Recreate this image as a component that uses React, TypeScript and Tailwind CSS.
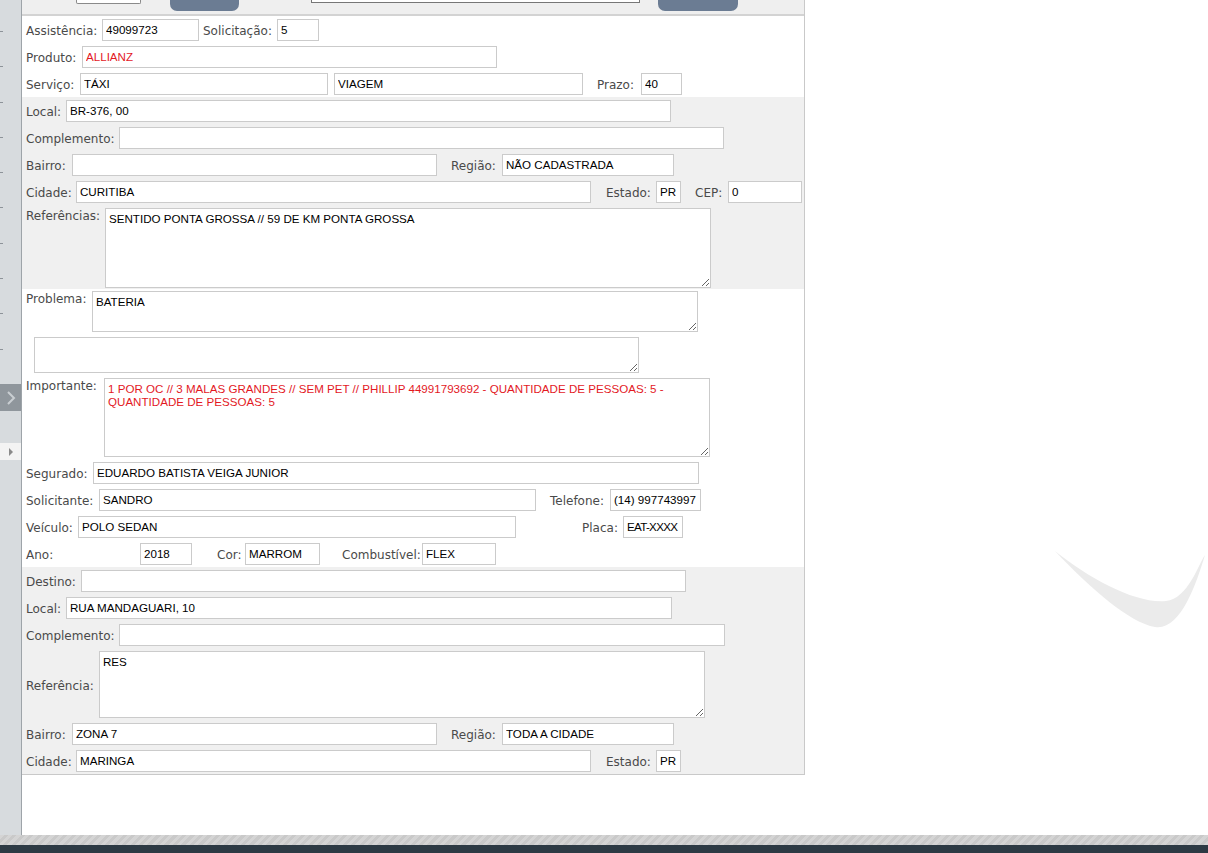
import React from "react";

// rótulo com largura fixa (do início do texto até o campo)
function L({ t, c = "", top = false }: { t: string; c?: string; top?: boolean }) {
  return (
    <span
      className={`shrink-0 whitespace-nowrap text-[12px] leading-[15px] text-[#4a4a4a] ${
        top ? "pt-[1px]" : "pt-[4px]"
      } ${c}`}
    >
      {t}
    </span>
  );
}

function I({ v = "", c = "", red = false }: { v?: string; c?: string; red?: boolean }) {
  return (
    <input
      readOnly
      value={v}
      className={`h-[22px] shrink-0 border border-[#cbcbcb] bg-white px-[3px] font-['Liberation_Sans',Arial,sans-serif] text-[11.6px] outline-none ${
        red ? "text-[#e3191f]" : "text-black"
      } ${c}`}
    />
  );
}

function T({ v = "", c = "", red = false }: { v?: string; c?: string; red?: boolean }) {
  return (
    <textarea
      readOnly
      value={v}
      className={`shrink-0 border border-[#cbcbcb] bg-white px-[3px] py-[3px] font-['Liberation_Sans',Arial,sans-serif] text-[11.6px] leading-[13px] outline-none ${
        red ? "text-[#e3191f]" : "text-black"
      } ${c}`}
    />
  );
}

const row = "flex h-[27px] items-center pl-[4px]";

function Sidebar() {
  const ticks = [0, 1, 2, 3, 4, 5, 6, 7, 8, 9];
  return (
    <div className="flex w-[22px] shrink-0 flex-col border-r border-[#9ea4a9] bg-[#d7dbde]">
      <div className="flex h-[384px] flex-col pt-[31px]">
        {ticks.map((i) => (
          <div key={i} className="mb-[35px] h-[1px] w-[3px] bg-[#8d9399]" />
        ))}
      </div>
      <div className="flex h-[27px] w-[21px] items-center justify-center bg-[#8f969c]">
        <svg width="12" height="16" viewBox="0 0 12 16">
          <path d="M3 2 L9 8 L3 14" fill="none" stroke="#c9ced2" strokeWidth="2" />
        </svg>
      </div>
      <div className="mt-[32px] flex h-[17px] w-[21px] items-center justify-center bg-[#f3f3f3]">
        <svg width="6" height="8" viewBox="0 0 6 8">
          <path d="M1 0 L5 4 L1 8 Z" fill="#8a8a8a" />
        </svg>
      </div>
    </div>
  );
}

export default function App() {
  return (
    <div className="relative flex h-[853px] w-[1208px] flex-col overflow-hidden bg-white font-['DejaVu_Sans',Verdana,sans-serif]">
      <div className="flex h-[835px]">
        <Sidebar />
        <div className="relative flex-1 bg-white">
          <div className="w-[783px] border-r border-b border-[#c9c9c9]">
            {/* topo cortado */}
            <div className="flex h-[16px] items-start border-b-2 border-[#d3d3d3] bg-[#efefef]">
              <div className="ml-[54px] h-[4px] w-[65px] rounded-b-[2px] border-x border-b border-[#8a8a8a] bg-white" />
              <div className="ml-[29px] h-[11px] w-[69px] rounded-b-[7px] bg-[#6b7c93]" />
              <div className="ml-[72px] h-[3px] w-[329px] border-x border-b border-[#777] bg-white" />
              <div className="ml-[18px] h-[11px] w-[80px] rounded-b-[7px] bg-[#6b7c93]" />
            </div>

            {/* atendimento */}
            <div className="bg-white">
              <div className={row}>
                <L t="Assistência:" c="w-[76px]" />
                <I v="49099723" c="w-[97px]" />
                <L t="Solicitação:" c="ml-[4px] w-[74px]" />
                <I v="5" c="w-[42px]" />
              </div>
              <div className={row}>
                <L t="Produto:" c="w-[56px]" />
                <I v="ALLIANZ" c="w-[415px]" red />
              </div>
              <div className={row}>
                <L t="Serviço:" c="w-[54px]" />
                <I v="TÁXI" c="w-[248px]" />
                <I v="VIAGEM" c="ml-[6px] w-[249px]" />
                <L t="Prazo:" c="ml-[14px] w-[44px]" />
                <I v="40" c="w-[41px]" />
              </div>
            </div>

            {/* origem */}
            <div className="bg-[#f0f0f0]">
              <div className={row}>
                <L t="Local:" c="w-[40px]" />
                <I v="BR-376, 00" c="w-[605px]" />
              </div>
              <div className={row}>
                <L t="Complemento:" c="w-[93px]" />
                <I c="w-[605px]" />
              </div>
              <div className={row}>
                <L t="Bairro:" c="w-[46px]" />
                <I c="w-[365px]" />
                <L t="Região:" c="ml-[14px] w-[51px]" />
                <I v="NÃO CADASTRADA" c="w-[172px]" />
              </div>
              <div className={row}>
                <L t="Cidade:" c="w-[50px]" />
                <I v="CURITIBA" c="w-[515px]" />
                <L t="Estado:" c="ml-[15px] w-[50px]" />
                <I v="PR" c="w-[25px]" />
                <L t="CEP:" c="ml-[14px] w-[33px]" />
                <I v="0" c="w-[74px]" />
              </div>
              <div className="flex h-[84px] items-start pl-[4px] pt-[3px]">
                <L t="Referências:" c="w-[79px]" top />
                <T v="SENTIDO PONTA GROSSA // 59 DE KM PONTA GROSSA" c="h-[80px] w-[606px]" />
              </div>
            </div>

            {/* problema / dados */}
            <div className="bg-white">
              <div className="flex h-[45px] items-start pl-[4px] pt-[2px]">
                <L t="Problema:" c="w-[66px]" top />
                <T v="BATERIA" c="h-[41px] w-[606px]" />
              </div>
              <div className="flex h-[41px] items-start pl-[12px] pt-[3px]">
                <T c="h-[36px] w-[605px]" />
              </div>
              <div className="flex h-[84px] items-start pl-[4px] pt-[3px]">
                <L t="Importante:" c="w-[78px]" top />
                <T
                  v="1 POR OC // 3 MALAS GRANDES // SEM PET // PHILLIP 44991793692 - QUANTIDADE DE PESSOAS: 5 - QUANTIDADE DE PESSOAS: 5"
                  c="h-[79px] w-[606px]"
                  red
                />
              </div>
              <div className={row}>
                <L t="Segurado:" c="w-[67px]" />
                <I v="EDUARDO BATISTA VEIGA JUNIOR" c="w-[606px]" />
              </div>
              <div className={row}>
                <L t="Solicitante:" c="w-[73px]" />
                <I v="SANDRO" c="w-[437px]" />
                <L t="Telefone:" c="ml-[14px] w-[60px]" />
                <I v="(14) 997743997" c="w-[91px]" />
              </div>
              <div className={row}>
                <L t="Veículo:" c="w-[52px]" />
                <I v="POLO SEDAN" c="w-[438px]" />
                <L t="Placa:" c="ml-[66px] w-[41px]" />
                <I v="EAT-XXXX" c="w-[60px] px-[2px] tracking-[-0.7px]" />
              </div>
              <div className={row}>
                <L t="Ano:" c="w-[114px]" />
                <I v="2018" c="w-[52px]" />
                <L t="Cor:" c="ml-[25px] w-[28px]" />
                <I v="MARROM" c="w-[75px]" />
                <L t="Combustível:" c="ml-[22px] w-[80px]" />
                <I v="FLEX" c="w-[74px]" />
              </div>
            </div>

            {/* destino */}
            <div className="bg-[#f0f0f0]">
              <div className={row}>
                <L t="Destino:" c="w-[55px]" />
                <I c="w-[605px]" />
              </div>
              <div className={row}>
                <L t="Local:" c="w-[40px]" />
                <I v="RUA MANDAGUARI, 10" c="w-[606px]" />
              </div>
              <div className={row}>
                <L t="Complemento:" c="w-[93px]" />
                <I c="w-[606px]" />
              </div>
              <div className="flex h-[72px] items-center pl-[4px]">
                <L t="Referência:" c="w-[73px]" />
                <T v="RES" c="h-[67px] w-[606px]" />
              </div>
              <div className={row}>
                <L t="Bairro:" c="w-[46px]" />
                <I v="ZONA 7" c="w-[365px]" />
                <L t="Região:" c="ml-[14px] w-[51px]" />
                <I v="TODA A CIDADE" c="w-[172px]" />
              </div>
              <div className={row}>
                <L t="Cidade:" c="w-[50px]" />
                <I v="MARINGA" c="w-[515px]" />
                <L t="Estado:" c="ml-[15px] w-[50px]" />
                <I v="PR" c="w-[25px]" />
              </div>
            </div>
          </div>

          {/* marca d'água */}
          <svg
            className="absolute left-[1028px] top-[543px]"
            width="160"
            height="90"
            viewBox="0 0 160 90"
          >
            <path
              d="M5 8 C40 45 80 80 105 84 C130 88 146 42 155 12 C149 20 138 56 116 58 C86 61 40 36 5 8 Z"
              fill="#ebebeb"
            />
          </svg>
        </div>
      </div>
      <div className="h-[10px] bg-[repeating-linear-gradient(135deg,#d4d4d4_0px,#d4d4d4_3px,#c9c9c9_3px,#c9c9c9_6px)]" />
      <div className="h-[8px] bg-[#2d3a44]" />
    </div>
  );
}
